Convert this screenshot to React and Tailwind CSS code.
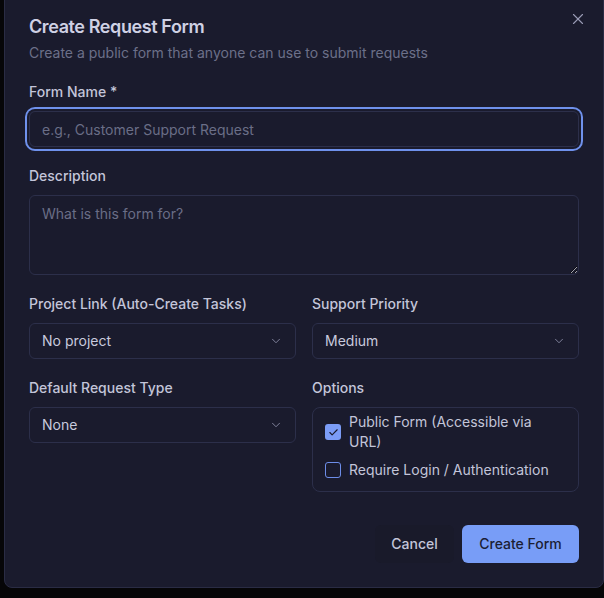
import { X, ChevronDown, Check } from "lucide-react";

const Label = ({ children }) => (
  <label className="block h-5 text-sm leading-5 font-medium text-[#c3c5d9] mb-[9px]">
    {children}
  </label>
);

const SelectBox = ({ value }) => (
  <button
    type="button"
    className="w-full h-9 flex items-center justify-between px-3 rounded-md border border-[#2c2f4a] bg-[#1a1b2d] text-sm text-[#c8cadd]"
  >
    <span>{value}</span>
    <ChevronDown size={14} strokeWidth={1.5} className="text-[#8b8ea8]" />
  </button>
);

const CheckRow = ({ checked, children }) => (
  <div className="flex items-center gap-2">
    {checked ? (
      <span className="w-4 h-4 shrink-0 rounded-[3px] bg-[#7b9cf6] flex items-center justify-center">
        <Check size={11} strokeWidth={2.5} className="text-[#1a1b2d]" />
      </span>
    ) : (
      <span className="w-4 h-4 shrink-0 rounded-[3px] border border-[#6d8de8]" />
    )}
    <span className="text-sm leading-5 text-[#c3c5d9] max-w-[205px]">{children}</span>
  </div>
);

export default function App() {
  return (
    <div
      className="min-h-screen w-full bg-[#060608] overflow-hidden"
      style={{ fontFamily: "Inter, 'Noto Sans', sans-serif" }}
    >
      <div className="relative ml-[4px] -mt-[8px] w-[600px] rounded-lg border border-[#2a2c44] bg-[#1a1b2d] px-6 pt-[20px] pb-6">
        <button className="absolute right-[16px] top-[17px] text-[#9a9cb6]">
          <X size={18} strokeWidth={1.5} />
        </button>

        <h2 className="text-lg leading-7 font-semibold text-[#cfd1e4] tracking-[-0.4px]">
          Create Request Form
        </h2>
        <p className="mt-[2px] text-sm leading-5 text-[#6c7089]">
          Create a public form that anyone can use to submit requests
        </p>

        <div className="mt-[19px] flex flex-col gap-[19px]">
          <div>
            <Label>Form Name *</Label>
            <input
              placeholder="e.g., Customer Support Request"
              className="w-full h-9 px-3 rounded-md border border-[#2c2f4a] bg-[#1a1b2d] text-sm text-[#c8cadd] placeholder:text-[#6a6e87] outline-none ring-2 ring-[#6f91ec] ring-offset-2 ring-offset-[#1a1b2d]"
            />
          </div>

          <div>
            <Label>Description</Label>
            <textarea
              placeholder="What is this form for?"
              className="block w-full h-20 px-3 py-2 rounded-md border border-[#2c2f4a] bg-[#1a1b2d] text-sm text-[#c8cadd] placeholder:text-[#6a6e87] outline-none"
            />
          </div>

          <div className="grid grid-cols-2 gap-4">
            <div>
              <Label>Project Link (Auto-Create Tasks)</Label>
              <SelectBox value="No project" />
            </div>
            <div>
              <Label>Support Priority</Label>
              <SelectBox value="Medium" />
            </div>
          </div>

          <div className="grid grid-cols-2 gap-4">
            <div>
              <Label>Default Request Type</Label>
              <SelectBox value="None" />
            </div>
            <div>
              <Label>Options</Label>
              <div className="rounded-lg border border-[#2c2f4a] px-3 pt-[4px] pb-[11px] flex flex-col gap-[8px]">
                <CheckRow checked>Public Form (Accessible via URL)</CheckRow>
                <CheckRow>Require Login / Authentication</CheckRow>
              </div>
            </div>
          </div>
        </div>

        <div className="mt-[33px] flex justify-end gap-2">
          <button className="h-[38px] w-[79px] rounded-md bg-[#191a2a] text-sm font-medium text-[#c3c5d9]">
            Cancel
          </button>
          <button className="h-[38px] w-[117px] rounded-md bg-[#789df7] text-sm font-medium text-[#1b1e34]">
            Create Form
          </button>
        </div>
      </div>
    </div>
  );
}
